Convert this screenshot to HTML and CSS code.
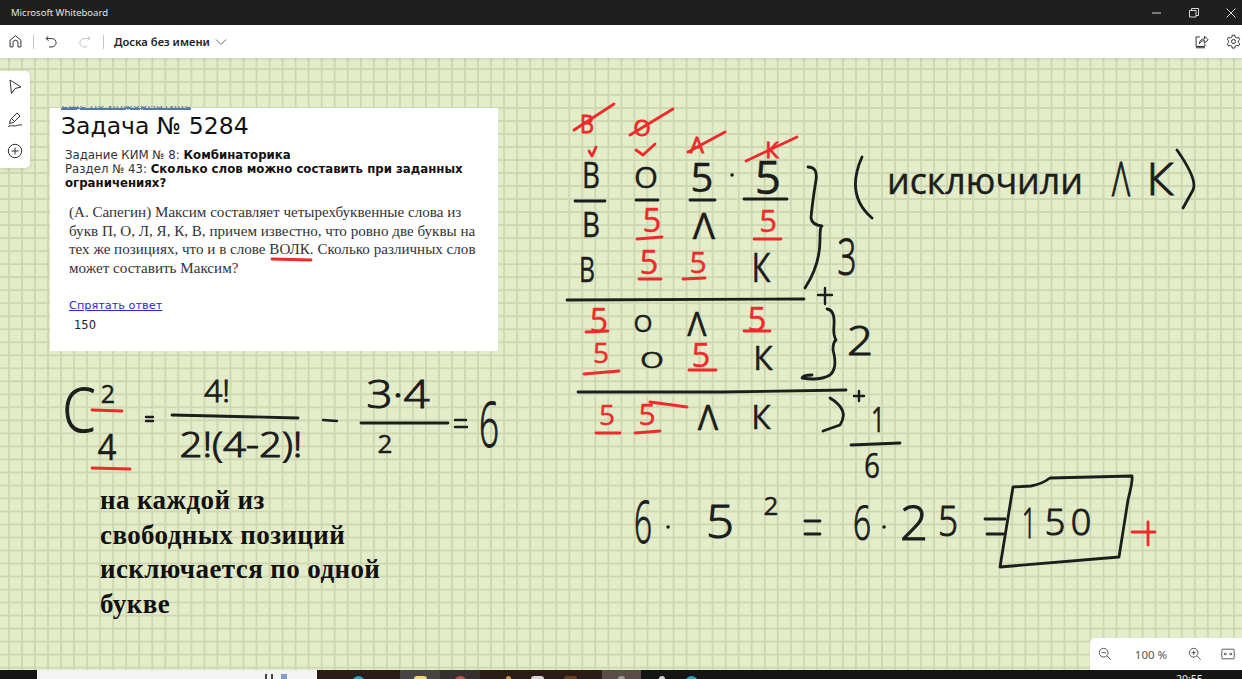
FILE: index.html
```html
<!DOCTYPE html>
<html lang="ru">
<head>
    <meta charset="UTF-8">
    <title>Microsoft Whiteboard</title>
    <link rel="stylesheet" href="styles.css">
</head>
<body>
    <div class="titlebar">
        <span class="app-name">Microsoft Whiteboard</span>
        <div class="win-controls">
            <svg class="win-icon" viewBox="0 0 12 12"><path d="M1 6h9"/></svg>
            <svg class="win-icon" viewBox="0 0 12 12"><path d="M1.500 3.500h6.500v6.500h-6.500zM3.500 3.500v-2h7v7h-2.500"/></svg>
            <svg class="win-icon" viewBox="0 0 12 12"><path d="M1.500 1.500l9 9M10.500 1.500l-9 9"/></svg>
        </div>
    </div>

    <div class="toolbar">
        <svg class="tb-icon" viewBox="0 0 18 18"><path d="M2.500 15.500v-8l6.500-5.500 6.500 5.500v8h-3.500v-5a3 3 0 0 0-6 0v5z"/></svg>
        <span class="sep"></span>
        <svg class="tb-icon" viewBox="0 0 18 18"><path d="M5 2.500l-2.500 3 3 2.500M3 5.500h6.500a4.500 4.500 0 0 1 0 10h-3.500"/></svg>
        <svg class="tb-icon redo" viewBox="0 0 18 18"><path d="M13 2.500l2.500 3-3 2.500M15 5.500h-6.500a4.500 4.500 0 0 0 0 10h3.500"/></svg>
        <span class="sep sep-doc"></span>
        <span class="doc-name">Доска без имени</span>
        <svg class="chevron" viewBox="0 0 12 8"><path d="M1 1.500l5 5 5-5"/></svg>
        <div class="tb-right">
            <svg class="tb-icon" viewBox="0 0 18 18"><path d="M7 3.500h-4.500v11.500h10.500v-3M2.500 16.500h10.500M6.500 11.500c0-4 3-5.500 6-5.500v-3.500l4.500 4.500-4.500 4v-3c-2.500 0-4.500 1-6 3.500z"/></svg>
            <svg class="tb-icon" viewBox="0 0 18 18"><path d="M7.500 1.500h3l.5 2.300 1.800 1 2.200-.8 1.500 2.600-1.700 1.600v2l1.700 1.600-1.500 2.600-2.200-.8-1.800 1-.5 2.300h-3l-.5-2.300-1.800-1-2.200.8-1.500-2.600 1.700-1.600v-2l-1.700-1.600 1.500-2.600 2.200.8 1.800-1z"/><circle cx="9" cy="9" r="2.400"/></svg>
        </div>
    </div>

    <div class="canvas">
        <div class="tools">
            <svg class="tool-icon" viewBox="0 0 18 18"><path d="M4 2l11 7-6 1.500-3.500 5z"/></svg>
            <svg class="tool-icon" viewBox="0 0 18 18"><path d="M3.500 13.500l1-4 6.500-6.500 3 3-6.500 6.500zM6 9l3 3M2 16.500c3-1.500 4-.5 6-.5s4-1.500 8-1"/></svg>
            <svg class="tool-icon" viewBox="0 0 18 18"><circle cx="9" cy="9" r="6.700"/><path d="M9 5.500v7M5.500 9h7"/></svg>
        </div>

        <div class="task-card">
            <div class="clipped-link"><a href="#">Ещё по информатике</a></div>
            <h1 class="task-title">Задача № 5284</h1>
            <p class="task-meta">Задание КИМ № 8: <b>Комбинаторика</b><br>
            Раздел № 43: <b>Сколько слов можно составить при заданных ограничениях?</b></p>
            <p class="task-body">(А. Сапегин) Максим составляет четырехбуквенные слова из букв П, О, Л, Я, К, В, причем известно, что ровно две буквы на тех же позициях, что и в слове ВОЛК. Сколько различных слов может составить Максим?</p>
            <a class="task-link" href="#">Спрятать ответ</a>
            <div class="task-answer">150</div>
        </div>

        <p class="note">на каждой из<br>свободных позиций<br>исключается по одной<br>букве</p>

        <!-- ink layer, page coordinates -->
        <svg class="ink-layer" viewBox="0 58 1242 612">
            <!-- lines, brackets, strikes -->
            <path class="ink" d="M575 201L605 201M636 200L658 200M690 200L715 200M744 199L787 199M567 300L804 299M578 392L723 392L846 390M851 445L900 443M172 415L298 418M361 423L448 423"/>
            <path class="ink" d="M808 167Q818 167 816 180Q812 205 811 218Q812 225 822 226Q820 225 820 240Q820 265 805 288"/>
            <path class="ink" d="M862 157Q845 195 872 218M1177 150Q1198 180 1193 190L1183 208M830 398Q850 410 840 425L823 431"/>
            <path class="ink" d="M827 309Q835 310 834 325Q833 335 836 340Q833 342 833 350Q838 368 830 375Q820 381 802 378Q803 375 812 375"/>
            <path class="ink thin" d="M825 288V304M818 295H832M859 391V401M854 396H864M146 417H153M146 421H153M323 420L337 421M455 420H466M455 427H467"/>
            <path class="ink" d="M805 521H820M805 534H820M985 519H1005M987 534H1003"/>
            <path class="ink" d="M1013 487L1031 486Q1042 484 1050 478L1132 476Q1133 480 1128 500L1119 557L1000 567L1013 487"/>
            <path class="ink dot" d="M732 175h.1M668 527h.1M884 527h.1"/>
            <path class="red" d="M574 130L614 104M630 135L673 109M688 152L725 132M746 161L797 137"/>
            <path class="red" d="M589 151L592 156L596 147M636 150L643 155L655 144"/>
            <path class="red" d="M637 239L662 237M639 279L661 279M683 279L705 278M754 239L781 239M586 332L608 331M744 331L770 331M584 374L619 371M689 370L716 370M596 433L620 433M635 433L660 431M650 402L687 407M92 410L122 411M92 468L130 469M272 259L311 260M1132 532H1155M1148 522V545"/>

            <!-- handwritten letters and digits -->
            <text class="hw hw-red hw-small" x="587" y="133" font-size="26" textLength="14" lengthAdjust="spacingAndGlyphs">В</text>
            <text class="hw hw-red hw-small" x="642" y="136" font-size="22">О</text>
            <text class="hw hw-red hw-small" x="697" y="153" font-size="22">А</text>
            <text class="hw hw-red hw-small" x="772" y="158" font-size="22">К</text>
            <text class="hw" x="591" y="188" font-size="36" textLength="18" lengthAdjust="spacingAndGlyphs">В</text>
            <text class="hw" x="646" y="188" font-size="30" textLength="24" lengthAdjust="spacingAndGlyphs">О</text>
            <text class="hw" x="702" y="192" font-size="40">5</text>
            <text class="hw" x="768" y="194" font-size="46">5</text>
            <text class="hw" x="591" y="237" font-size="35" textLength="18" lengthAdjust="spacingAndGlyphs">В</text>
            <text class="hw hw-red" x="652" y="232" font-size="33">5</text>
            <text class="hw" x="704" y="239" font-size="37">Λ</text>
            <text class="hw hw-red" x="768" y="232" font-size="31">5</text>
            <text class="hw" x="587" y="282" font-size="35" textLength="16" lengthAdjust="spacingAndGlyphs">В</text>
            <text class="hw hw-red" x="649" y="274" font-size="33">5</text>
            <text class="hw hw-red" x="698" y="273" font-size="30">5</text>
            <text class="hw" x="761" y="282" font-size="41" textLength="19" lengthAdjust="spacingAndGlyphs">К</text>
            <text class="hw hw-big" x="847" y="275" font-size="50" textLength="19" lengthAdjust="spacingAndGlyphs">3</text>
            <text class="hw" x="985" y="194" font-size="36" textLength="196" lengthAdjust="spacingAndGlyphs">исключили</text>
            <text class="hw hw-big" x="1121" y="196" font-size="47" textLength="18" lengthAdjust="spacingAndGlyphs">Λ</text>
            <text class="hw hw-big" x="1160" y="195" font-size="44" textLength="27" lengthAdjust="spacingAndGlyphs">К</text>

            <text class="hw hw-red" x="599" y="332" font-size="32">5</text>
            <text class="hw" x="643" y="332" font-size="24" textLength="19" lengthAdjust="spacingAndGlyphs">О</text>
            <text class="hw" x="697" y="336" font-size="32">Λ</text>
            <text class="hw hw-red" x="757" y="331" font-size="33">5</text>
            <text class="hw hw-red" x="601" y="363" font-size="28">5</text>
            <text class="hw" x="652" y="368" font-size="22" textLength="24" lengthAdjust="spacingAndGlyphs">О</text>
            <text class="hw hw-red" x="701" y="367" font-size="33">5</text>
            <text class="hw" x="763" y="370" font-size="32">К</text>
            <text class="hw hw-big" x="860" y="355" font-size="40" textLength="26" lengthAdjust="spacingAndGlyphs">2</text>
            <text class="hw hw-red" x="607" y="425" font-size="28">5</text>
            <text class="hw hw-red" x="647" y="425" font-size="30">5</text>
            <text class="hw" x="708" y="430" font-size="34">Λ</text>
            <text class="hw" x="761" y="429" font-size="32">К</text>
            <text class="hw" x="878" y="432" font-size="35" textLength="14" lengthAdjust="spacingAndGlyphs">1</text>
            <text class="hw" x="872" y="478" font-size="35" textLength="16" lengthAdjust="spacingAndGlyphs">6</text>

            <text class="hw hw-big" x="79" y="432" font-size="60" textLength="33" lengthAdjust="spacingAndGlyphs">C</text>
            <text class="hw" x="108" y="403" font-size="25">2</text>
            <text class="hw" x="107" y="460" font-size="37" textLength="19" lengthAdjust="spacingAndGlyphs">4</text>
            <text class="hw hw-big" x="217" y="402" font-size="32">4!</text>
            <text class="hw hw-big" x="241" y="457" font-size="34" textLength="123" lengthAdjust="spacingAndGlyphs">2!(4-2)!</text>
            <text class="hw hw-big" x="398" y="408" font-size="39" textLength="63" lengthAdjust="spacingAndGlyphs">3·4</text>
            <text class="hw" x="385" y="453" font-size="26">2</text>
            <text class="hw hw-big" x="489" y="447" font-size="62" textLength="20" lengthAdjust="spacingAndGlyphs">6</text>

            <text class="hw hw-big" x="643" y="543" font-size="58" textLength="18" lengthAdjust="spacingAndGlyphs">6</text>
            <text class="hw hw-big" x="720" y="538" font-size="46" textLength="28" lengthAdjust="spacingAndGlyphs">5</text>
            <text class="hw" x="771" y="515" font-size="26">2</text>
            <text class="hw hw-big" x="862" y="540" font-size="48" textLength="18" lengthAdjust="spacingAndGlyphs">6</text>
            <text class="hw hw-big" x="914" y="540" font-size="48" textLength="28" lengthAdjust="spacingAndGlyphs">2</text>
            <text class="hw hw-big" x="948" y="536" font-size="42" textLength="20" lengthAdjust="spacingAndGlyphs">5</text>
            <text class="hw hw-big" x="1029" y="538" font-size="42" textLength="14" lengthAdjust="spacingAndGlyphs">1</text>
            <text class="hw hw-big" x="1055" y="535" font-size="36">5</text>
            <text class="hw hw-big" x="1081" y="535" font-size="36">0</text>
        </svg>

        <div class="zoom-panel">
            <svg class="zoom-icon" viewBox="0 0 16 16"><circle cx="6.500" cy="6.500" r="5"/><path d="M4 6.500h5M10.200 10.200l4.300 4.300"/></svg>
            <span class="zoom-value">100 %</span>
            <svg class="zoom-icon" viewBox="0 0 16 16"><circle cx="6.500" cy="6.500" r="5"/><path d="M4 6.500h5M6.500 4v5M10.200 10.200l4.300 4.300"/></svg>
            <svg class="zoom-icon fit" viewBox="0 0 16 16"><rect x="1" y="2.500" width="14" height="11" rx="1"/><path d="M3.500 8h3.500M5 6.500l-1.500 1.500 1.500 1.500M12.500 8h-3.500M11 6.500l1.500 1.500-1.500 1.500"/></svg>
        </div>
    </div>

    <div class="taskbar">
        <div class="seg seg-start"></div>
        <div class="seg seg-window"><i class="mark"></i><i class="mark"></i><i class="mark mark-blue"></i></div>
        <div class="seg seg-brown seg-a"><i class="app app-blue"></i></div>
        <div class="seg seg-open"><i class="app app-yellow"></i></div>
        <div class="seg seg-open2"><i class="app app-red"></i></div>
        <div class="seg seg-brown seg-b">
            <i class="app app-orange"></i>
            <i class="app app-white"></i>
            <i class="app app-brown"></i>
        </div>
        <div class="seg seg-active"><i class="app app-grey"></i></div>
        <div class="seg seg-rest">
            <i class="app app-white small"></i>
            <i class="app app-blue"></i>
            <span class="clock">20:55</span>
        </div>
    </div>
</body>
</html>
```

FILE: styles.css
```css
* {
    box-sizing: border-box;
}

body {
    margin: 0;
    width: 1242px;
    height: 679px;
    overflow: hidden;
    display: flex;
    flex-direction: column;
    font-family: "Noto Sans", sans-serif;
}

svg {
    display: block;
}

/* title bar */
.titlebar {
    height: 25px;
    background: #1f1f1f;
    display: flex;
    align-items: center;
    padding-left: 11px;
}

.app-name {
    font-size: 9.500px;
    color: #e2e2e2;
}

.win-controls {
    margin-left: auto;
    display: flex;
    gap: 25px;
    padding-right: 5px;
}

.win-icon {
    width: 12px;
    height: 12px;
    fill: none;
    stroke: #d8d8d8;
    stroke-width: 1;
}

/* toolbar */
.toolbar {
    height: 33px;
    background: #fff;
    display: flex;
    align-items: center;
    padding-left: 8px;
    z-index: 2;
    box-shadow: 0 1px 3px rgba(0, 0, 0, 0.12);
}

.tb-icon {
    width: 15px;
    height: 15px;
    fill: none;
    stroke: #333;
    stroke-width: 1.200;
}

.redo {
    stroke: #c4c4c4;
    margin-left: 18px;
}

.sep {
    width: 1px;
    height: 14px;
    background: #c8c8c8;
    margin: 0 10px;
}

.sep-doc {
    margin: 0 10px 0 11px;
}

.doc-name {
    font-size: 11.200px;
    font-weight: 600;
    color: #222;
}

.chevron {
    width: 12px;
    height: 8px;
    margin-left: 5px;
    fill: none;
    stroke: #666;
    stroke-width: 1;
}

.tb-right {
    margin-left: auto;
    display: flex;
    gap: 17px;
    padding-right: 1px;
}

/* board */
.canvas {
    position: relative;
    height: 612px;
    background-color: #e4edc9;
    background-image:
        linear-gradient(to right, #cdd8b2 1.500px, transparent 1.500px),
        linear-gradient(to bottom, #cdd8b2 1.500px, transparent 1.500px);
    background-size: 13.040px 13.030px;
    background-position: 8px 10px;
}

.tools {
    position: absolute;
    left: 0;
    top: 13px;
    width: 30px;
    height: 97px;
    background: #fff;
    border-radius: 0 5px 5px 0;
    box-shadow: 0 1px 4px rgba(0, 0, 0, 0.15);
    display: flex;
    flex-direction: column;
    align-items: center;
    justify-content: space-between;
    padding: 7px 0 8px;
}

.tool-icon {
    width: 18px;
    height: 18px;
    fill: none;
    stroke: #333;
    stroke-width: 1;
}

/* pasted task */
.task-card {
    position: absolute;
    left: 50px;
    top: 50px;
    width: 448px;
    height: 243px;
    background: #fff;
    color: #222;
    font-family: "DejaVu Sans", sans-serif;
}

.clipped-link {
    position: absolute;
    left: 11px;
    top: -2px;
    height: 4px;
    overflow: hidden;
    font-size: 11.500px;
    line-height: 4px;
}

.clipped-link a {
    color: #5577aa;
    display: block;
    margin-top: -4px;
    padding-bottom: 2px;
    border-bottom: 1px solid #5577aa;
    height: 7px;
}

.task-title {
    margin: 0;
    padding: 3px 0 0 11px;
    font-size: 23.500px;
    line-height: 30px;
    font-weight: 400;
    color: #111;
}

.task-meta {
    margin: 7px 24px 0 15px;
    font-size: 11.750px;
    line-height: 14px;
    color: #333;
}

.task-meta b {
    color: #111;
}

.task-body {
    margin: 13px 20px 0 19px;
    font-family: "Liberation Serif", serif;
    font-size: 15.100px;
    line-height: 18.700px;
    color: #333;
}

.task-link {
    display: block;
    margin: 21px 0 0 19px;
    font-size: 11.300px;
    line-height: 14px;
    color: #2a2ae0;
}

.task-answer {
    margin: 5px 0 0 24px;
    font-size: 11.500px;
    line-height: 14px;
    color: #222;
}

.note {
    position: absolute;
    left: 100px;
    top: 425px;
    margin: 0;
    font-family: "Liberation Serif", serif;
    font-weight: 700;
    font-size: 27px;
    line-height: 34.500px;
    letter-spacing: 0.400px;
    color: #111;
}

/* ink */
.ink-layer {
    position: absolute;
    left: 0;
    top: 0;
    width: 1242px;
    height: 612px;
    pointer-events: none;
}

.ink,
.red {
    fill: none;
    stroke: #1d1d1d;
    stroke-width: 2.800;
    stroke-linecap: round;
    stroke-linejoin: round;
}

.red {
    stroke: #ee2a2a;
}

.ink.thin {
    stroke-width: 2.400;
}

.ink.dot {
    stroke-width: 3.500;
}

.hw {
    font-family: "Open Sans", sans-serif;
    text-anchor: middle;
    fill: #1d1d1d;
    stroke: #1d1d1d;
    stroke-width: 0.400;
}

.hw-red {
    fill: #ee2a2a;
    stroke: #ee2a2a;
}

.hw-small {
    stroke-width: 0.900;
}

.hw-big {
    font-weight: 300;
    stroke-width: 1.100;
}

/* zoom */
.zoom-panel {
    position: absolute;
    right: 0;
    bottom: 0;
    width: 152px;
    height: 32px;
    background: #fff;
    border-radius: 5px 0 0 0;
    display: flex;
    align-items: center;
    padding-left: 8px;
}

.zoom-icon {
    width: 14px;
    height: 14px;
    fill: none;
    stroke: #444;
    stroke-width: 1;
}

.zoom-value {
    width: 64px;
    margin: 0 5px 0 7px;
    text-align: center;
    font-size: 11.500px;
    color: #555;
}

.fit {
    margin-left: 19px;
}

/* bottom of the desktop taskbar, cut off by the screenshot */
.taskbar {
    flex: 1;
    min-height: 9px;
    display: flex;
    background: #151515;
    overflow: hidden;
}

.seg {
    height: 40px;
    display: flex;
    gap: 20px;
    padding-top: 6px;
    justify-content: center;
}

.seg-start {
    width: 37px;
}

.seg-window {
    width: 280px;
    background: #f3f3f3;
    justify-content: flex-start;
    gap: 4px;
    padding: 4px 0 0 228px;
}

.mark {
    display: block;
    width: 2px;
    height: 8px;
    background: #444;
}

.mark-blue {
    margin-left: 4px;
    width: 6px;
    background: #7d9fd0;
}

.seg-brown {
    background: #2b1c17;
}

.seg-a {
    width: 83px;
}

.seg-open {
    width: 40px;
    background: #474442;
}

.seg-open2 {
    width: 40px;
    background: #343130;
}

.seg-b {
    width: 122px;
}

.seg-active {
    width: 39px;
    background: #5a4c47;
}

.seg-rest {
    flex: 1;
    justify-content: flex-start;
    padding-left: 18px;
    position: relative;
}

.app {
    display: block;
    width: 13px;
    height: 13px;
    border-radius: 3px;
}

.app.small {
    width: 6px;
}

.app-blue {
    background: #19a7cf;
    border-radius: 50%;
}

.app-yellow {
    background: #f6d56a;
}

.app-red {
    background: #d24a4a;
    border-radius: 50%;
}

.app-orange {
    width: 5px;
    background: #d8932c;
}

.app-white {
    background: #d5d5d5;
}

.app-brown {
    background: #6b3d1c;
}

.app-grey {
    width: 7px;
    background: #9a9a9a;
}

.clock {
    position: absolute;
    left: 535px;
    top: 2px;
    font-size: 10.500px;
    color: #eee;
}
```
